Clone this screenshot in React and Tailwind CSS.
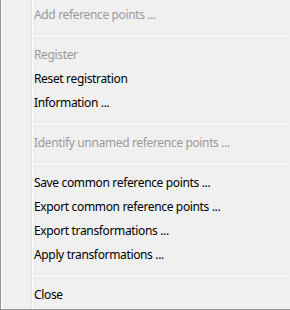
const items = [
  { label: 'Add reference points ...', disabled: true },
  { sep: true },
  { label: 'Register', disabled: true },
  { label: 'Reset registration' },
  { label: 'Information ...' },
  { sep: true },
  { label: 'Identify unnamed reference points ...', disabled: true },
  { sep: true },
  { label: 'Save common reference points ...' },
  { label: 'Export common reference points ...' },
  { label: 'Export transformations ...' },
  { label: 'Apply transformations ...' },
  { sep: true },
  { label: 'Close' },
];

export default function App() {
  return (
    <div
      className="flex h-[310px] w-[290px] overflow-hidden border-b border-l border-[#979797] bg-[#f0f0f0] text-[12px] tracking-[-0.35px] text-black"
      style={{ fontFamily: '"Noto Sans", "Open Sans", sans-serif' }}
    >
      {/* icon gutter */}
      <div className="w-[31px] shrink-0 border-l border-white border-r border-r-[#e2e3e3]" />
      <div className="flex flex-1 flex-col border-l border-white pt-[3px]">
        {items.map((it, i) =>
          it.sep ? (
            <div key={i} className="flex h-4 items-center pl-[1px] pr-[2px]">
              <div className="h-[2px] w-full border-b border-white bg-[#e3e3e3]" />
            </div>
          ) : (
            <div
              key={i}
              className={`flex h-6 items-center pl-[1px] ${it.disabled ? 'text-[#9a9a9a]' : 'text-black'}`}
            >
              {it.label}
            </div>
          )
        )}
      </div>
    </div>
  );
}
